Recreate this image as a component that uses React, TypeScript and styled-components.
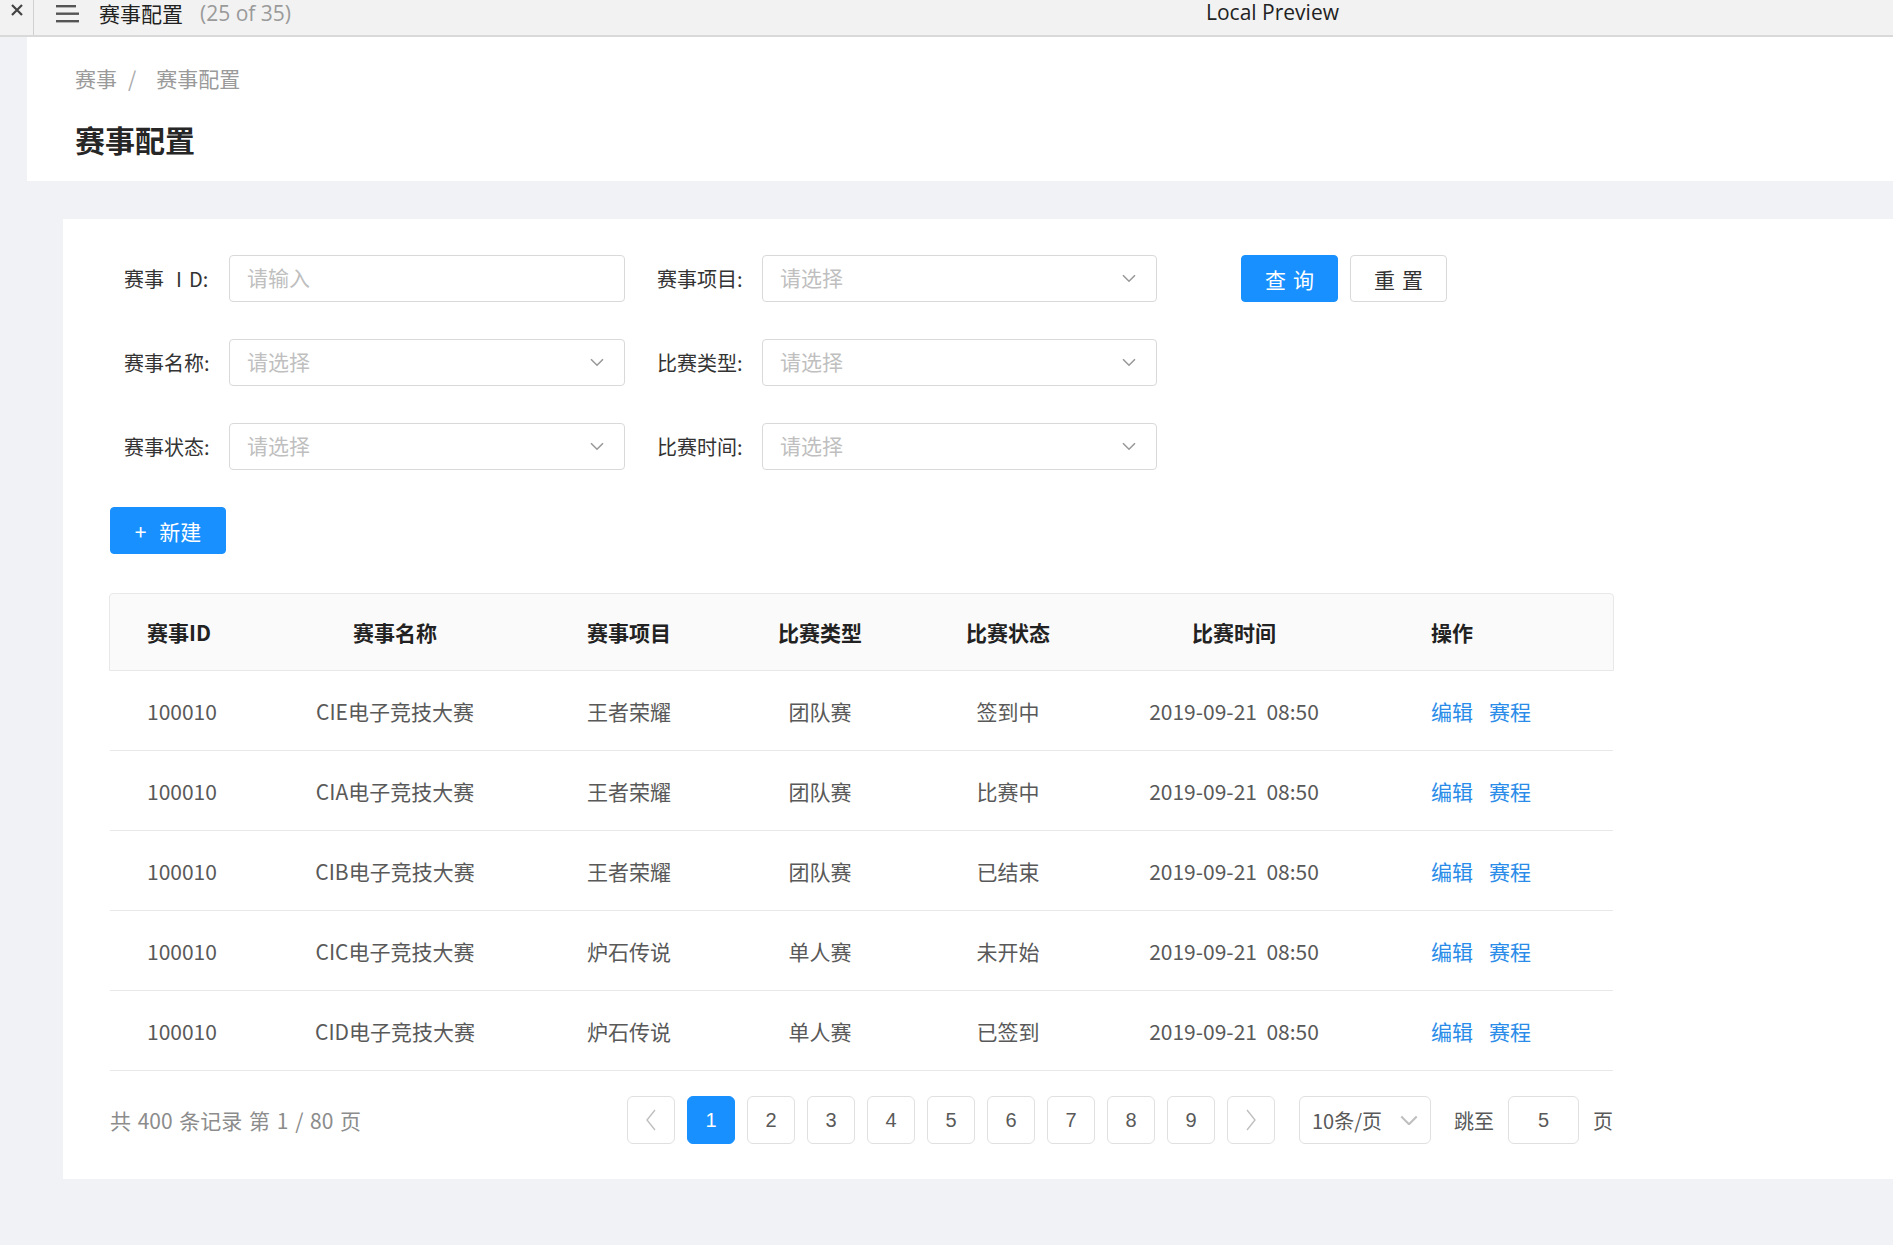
import { createGlobalStyle, styled } from "styled-components";

const GlobalStyle = createGlobalStyle`
  html, body {
    margin: 0;
    padding: 0;
    background: #f0f2f5;
    font-family: "Noto Sans CJK SC", "Noto Sans", sans-serif;
  }
  * {
    box-sizing: border-box;
  }
`;

const Page = styled.div`
  width: 1893px;
  height: 1245px;
  overflow: hidden;
  background: #f0f2f5;
`;

const TopBar = styled.div`
  height: 37px;
  background: #f2f2f2;
  border-bottom: 2px solid #d9d9d9;
  display: flex;
  align-items: flex-start;
  padding-top: 2px;
`;

const CloseBox = styled.div`
  width: 34px;
  height: 35px;
  margin-top: -2px;
  border-right: 1px solid #d0d0d0;
  display: flex;
  justify-content: center;
  padding-top: 3px;
`;

const MenuIcon = styled.div`
  margin-left: 22px;
  padding-top: 2px;
`;

const WindowTitle = styled.div`
  margin-left: 20px;
  font-size: 21px;
  line-height: 22px;
  color: #222;
  display: flex;
  gap: 17px;
  width: 1107px;
`;

const Counter = styled.span`
  color: #9a9a9a;
  font-family: "Open Sans", sans-serif;
  font-size: 21px;
`;

const PreviewTitle = styled.div`
  font-family: "Open Sans", sans-serif;
  font-size: 21px;
  line-height: 21px;
  color: #222;
`;

const Main = styled.div`
  padding-left: 27px;
`;

const PageHeader = styled.div`
  background: #fff;
  padding: 27px 48px 21px;
`;

const Breadcrumb = styled.div`
  font-size: 21px;
  line-height: 28px;
  color: #9a9a9a;
  display: flex;
`;

const Separator = styled.span`
  margin: 0 20px 0 11px;
  color: #aaa;
`;

const Title = styled.h1`
  margin: 26px 0 0;
  font-size: 30px;
  line-height: 42px;
  font-weight: 700;
  color: #262626;
`;

const Content = styled.div`
  padding: 38px 0 0 36px;
`;

const Card = styled.div`
  background: #fff;
  padding: 36px 0 35px 47px;
`;

const Form = styled.div`
  padding-left: 14px;
  display: grid;
  grid-template-columns: 501px 500px auto;
  column-gap: 32px;
  row-gap: 37px;
`;

const FormItem = styled.div`
  display: flex;
  align-items: center;
  gap: 14px;
`;

const Label = styled.label`
  width: 91px;
  font-size: 20px;
  color: #333;
  white-space: nowrap;
`;

const Spaced = styled.span`
  margin-left: 12px;
  letter-spacing: 7px;
`;

const Field = styled.div`
  flex: 1;
  height: 47px;
  border: 1px solid #d9d9d9;
  border-radius: 4px;
  display: flex;
  align-items: center;
  justify-content: space-between;
  padding: 0 20px 3px 17px;
  font-size: 21px;
  color: #bfbfbf;
  svg {
    margin-top: 3px;
  }
`;

const Actions = styled.div`
  display: flex;
  gap: 12px;
  margin-left: 52px;
`;

const Button = styled.button<{ $primary?: boolean; $width: number; $spread?: boolean }>`
  width: ${(p) => p.$width}px;
  height: 47px;
  border-radius: 4px;
  border: 1px solid ${(p) => (p.$primary ? "#1890ff" : "#d9d9d9")};
  background: ${(p) => (p.$primary ? "#1890ff" : "#fff")};
  color: ${(p) => (p.$primary ? "#fff" : "#333")};
  font-family: inherit;
  font-size: 21px;
  letter-spacing: ${(p) => (p.$spread ? "7px" : "0")};
  text-indent: ${(p) => (p.$spread ? "7px" : "0")};
  display: flex;
  align-items: center;
  justify-content: center;
  gap: 13px;
  padding: 0;
`;

const CreateRow = styled.div`
  margin-top: 37px;
`;

const Table = styled.div`
  width: 1503px;
  margin-top: 39px;
`;

const columns = "180px 210px 258px 124px 252px 200px 279px";

const HeadRow = styled.div`
  display: grid;
  grid-template-columns: ${columns};
  height: 78px;
  align-items: center;
  background: #fafafa;
  border: 1px solid #e8e8e8;
  border-radius: 4px 4px 0 0;
  margin: 0 -1px;
`;

const Row = styled.div`
  display: grid;
  grid-template-columns: ${columns};
  height: 80px;
  align-items: center;
  border-bottom: 1px solid #e8e8e8;
`;

const Cell = styled.div<{ $align: "left" | "center"; $pad?: number; $head?: boolean }>`
  text-align: ${(p) => p.$align};
  padding-left: ${(p) => p.$pad ?? 0}px;
  font-size: 21px;
  font-weight: ${(p) => (p.$head ? 700 : 400)};
  color: ${(p) => (p.$head ? "#222" : "#595959")};
  white-space: nowrap;
`;

const Link = styled.a`
  color: #2a8ce8;
  margin-right: 16px;
  cursor: pointer;
`;

const Pager = styled.div`
  width: 1503px;
  margin-top: 25px;
  display: flex;
  align-items: center;
  justify-content: space-between;
`;

const Total = styled.div`
  font-size: 21px;
  color: #8c8c8c;
  word-spacing: 2px;
`;

const PagerRight = styled.div`
  display: flex;
  align-items: center;
`;

const PageList = styled.div`
  display: flex;
  gap: 12px;
  margin-right: 24px;
`;

const PageButton = styled.div<{ $active?: boolean }>`
  width: 48px;
  height: 48px;
  border-radius: 6px;
  border: 1px solid ${(p) => (p.$active ? "#1890ff" : "#e0e0e0")};
  background: ${(p) => (p.$active ? "#1890ff" : "#fff")};
  color: ${(p) => (p.$active ? "#fff" : "#595959")};
  font-family: "Liberation Sans", sans-serif;
  font-size: 20px;
  display: flex;
  align-items: center;
  justify-content: center;
`;

const SizeSelect = styled.div`
  width: 132px;
  height: 48px;
  border: 1px solid #e0e0e0;
  border-radius: 6px;
  display: flex;
  align-items: center;
  justify-content: space-between;
  padding: 0 12px 0 12px;
  font-size: 20px;
  color: #595959;
`;

const PagerText = styled.span`
  font-size: 20px;
  color: #595959;
  margin: 0 14px 0 23px;
`;

const JumpInput = styled.div`
  width: 71px;
  height: 48px;
  border: 1px solid #e0e0e0;
  border-radius: 6px;
  display: flex;
  align-items: center;
  justify-content: center;
  font-family: "Liberation Sans", sans-serif;
  font-size: 20px;
  color: #595959;
  margin-right: 14px;
`;

const PageUnit = styled.span`
  font-size: 20px;
  color: #595959;
`;

const Chevron = ({ color = "#999", size = 14 }: { color?: string; size?: number }) => (
  <svg width={size} height={size * 0.6} viewBox="0 0 14 8" fill="none">
    <path d="M1 1l6 6 6-6" stroke={color} strokeWidth="1.6" />
  </svg>
);

const rows = [
  { id: "100010", name: "CIE电子竞技大赛", game: "王者荣耀", type: "团队赛", status: "签到中" },
  { id: "100010", name: "CIA电子竞技大赛", game: "王者荣耀", type: "团队赛", status: "比赛中" },
  { id: "100010", name: "CIB电子竞技大赛", game: "王者荣耀", type: "团队赛", status: "已结束" },
  { id: "100010", name: "CIC电子竞技大赛", game: "炉石传说", type: "单人赛", status: "未开始" },
  { id: "100010", name: "CID电子竞技大赛", game: "炉石传说", type: "单人赛", status: "已签到" },
];

const headers = ["赛事ID", "赛事名称", "赛事项目", "比赛类型", "比赛状态", "比赛时间", "操作"];

const aligns: ("left" | "center")[] = ["left", "center", "center", "center", "center", "center", "left"];
const pads = [37, 0, 0, 0, 0, 0, 97];

const selectRows = [
  ["赛事名称:", "比赛类型:"],
  ["赛事状态:", "比赛时间:"],
];

export default function App() {
  return (
    <Page>
      <GlobalStyle />
      <TopBar>
        <CloseBox>
          <svg width="14" height="14" viewBox="0 0 14 14">
            <path d="M2 2l10 10M12 2L2 12" stroke="#444" strokeWidth="2.2" />
          </svg>
        </CloseBox>
        <MenuIcon>
          <svg width="23" height="18" viewBox="0 0 23 18">
            <rect x="0" y="0" width="20" height="2.4" fill="#555" />
            <rect x="0" y="7.5" width="23" height="2.4" fill="#555" />
            <rect x="0" y="15" width="23" height="2.4" fill="#555" />
          </svg>
        </MenuIcon>
        <WindowTitle>
          <span>赛事配置</span>
          <Counter>(25 of 35)</Counter>
        </WindowTitle>
        <PreviewTitle>Local Preview</PreviewTitle>
      </TopBar>
      <Main>
        <PageHeader>
          <Breadcrumb>
            <span>赛事</span>
            <Separator>/</Separator>
            <span>赛事配置</span>
          </Breadcrumb>
          <Title>赛事配置</Title>
        </PageHeader>
        <Content>
          <Card>
            <Form>
              <FormItem>
                <Label>
                  赛事<Spaced>I</Spaced>D:
                </Label>
                <Field>请输入</Field>
              </FormItem>
              <FormItem>
                <Label>赛事项目:</Label>
                <Field>
                  请选择
                  <Chevron />
                </Field>
              </FormItem>
              <Actions>
                <Button $primary $spread $width={97}>查询</Button>
                <Button $spread $width={97}>重置</Button>
              </Actions>
              {selectRows.flatMap((pair, i) => [
                ...pair.map((label) => (
                  <FormItem key={label}>
                    <Label>{label}</Label>
                    <Field>
                      请选择
                      <Chevron />
                    </Field>
                  </FormItem>
                )),
                <div key={`empty-${i}`} />,
              ])}
            </Form>
            <CreateRow>
              <Button $primary $width={116}>
                <span>+</span>
                <span>新建</span>
              </Button>
            </CreateRow>
            <Table>
              <HeadRow>
                {headers.map((h, i) => (
                  <Cell key={h} $head $align={aligns[i]} $pad={pads[i]}>
                    {h}
                  </Cell>
                ))}
              </HeadRow>
              {rows.map((r) => (
                <Row key={r.name}>
                  <Cell $align="left" $pad={37}>{r.id}</Cell>
                  <Cell $align="center">{r.name}</Cell>
                  <Cell $align="center">{r.game}</Cell>
                  <Cell $align="center">{r.type}</Cell>
                  <Cell $align="center">{r.status}</Cell>
                  <Cell $align="center">2019-09-21&nbsp;&nbsp;08:50</Cell>
                  <Cell $align="left" $pad={97}>
                    <Link>编辑</Link>
                    <Link>赛程</Link>
                  </Cell>
                </Row>
              ))}
            </Table>
            <Pager>
              <Total>共 400 条记录 第 1 / 80 页</Total>
              <PagerRight>
                <PageList>
                  <PageButton>
                    <svg width="12" height="22" viewBox="0 0 12 22">
                      <path d="M10 1L2 11l8 10" stroke="#bfbfbf" strokeWidth="1.4" fill="none" />
                    </svg>
                  </PageButton>
                  {[1, 2, 3, 4, 5, 6, 7, 8, 9].map((n) => (
                    <PageButton key={n} $active={n === 1}>
                      {n}
                    </PageButton>
                  ))}
                  <PageButton>
                    <svg width="12" height="22" viewBox="0 0 12 22">
                      <path d="M2 1l8 10-8 10" stroke="#bfbfbf" strokeWidth="1.4" fill="none" />
                    </svg>
                  </PageButton>
                </PageList>
                <SizeSelect>
                  10条/页
                  <Chevron color="#bfbfbf" size={18} />
                </SizeSelect>
                <PagerText>跳至</PagerText>
                <JumpInput>5</JumpInput>
                <PageUnit>页</PageUnit>
              </PagerRight>
            </Pager>
          </Card>
        </Content>
      </Main>
    </Page>
  );
}
